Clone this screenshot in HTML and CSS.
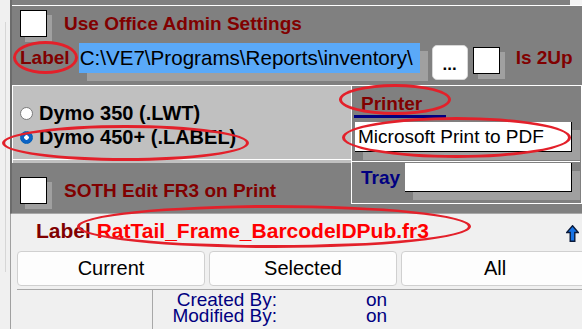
FILE: index.html
```html
<!DOCTYPE html>
<html lang="en">
<head>
    <meta charset="UTF-8">
    <title>Label Settings</title>
    <link rel="stylesheet" href="styles.css">
</head>
<body>
    <div class="screen">
        <div class="upper">
            <div class="strip"></div>
            <div class="admin">
                <div class="row row-top">
                    <span class="check"></span>
                    <span class="red-label">Use Office Admin Settings</span>
                </div>
                <div class="row row-path">
                    <span class="red-label">Label</span>
                    <div class="path-field">C:\VE7\Programs\Reports\inventory\</div>
                    <button class="dots">...</button>
                    <span class="check check-2up"></span>
                    <span class="red-label">Is 2Up</span>
                </div>
            </div>
            <div class="middle">
                <div class="left-col">
                    <div class="dymo">
                        <div class="dymo-list">
                            <label class="opt"><span class="radio"></span>Dymo 350 (.LWT)</label>
                            <label class="opt"><span class="radio on"></span>Dymo 450+ (.LABEL)</label>
                        </div>
                    </div>
                    <div class="soth">
                        <span class="check"></span>
                        <span class="red-label">SOTH Edit FR3 on Print</span>
                    </div>
                </div>
                <div class="printer">
                    <div class="printer-head">Printer</div>
                    <div class="printer-bar"></div>
                    <div class="field printer-field">Microsoft Print to PDF</div>
                    <div class="tray-row">
                        <span class="blue-label">Tray</span>
                        <div class="field tray-field"></div>
                    </div>
                </div>
            </div>
        </div>

        <div class="lower">
            <div class="file-row">
                <div><span class="red-label big">Label</span> <span class="file-name">RatTail_Frame_BarcodeIDPub.fr3</span></div>
                <svg class="up-arrow" width="13" height="17" viewBox="0 0 13 17">
                    <path d="M6.5 0.8 L12.3 7.5 L8.8 7.5 L8.8 16.3 L4.2 16.3 L4.2 7.5 L0.7 7.5 Z" fill="#1673e6" stroke="#0a1a3a" stroke-width="1.4" stroke-linejoin="miter"/>
                </svg>
            </div>
            <div class="buttons">
                <button class="btn">Current</button>
                <button class="btn">Selected</button>
                <button class="btn">All</button>
            </div>
            <div class="info">
                <div class="info-left"></div>
                <div class="info-grid">
                    <span class="info-key">Created By:</span><span class="info-val">on</span>
                    <span class="info-key">Modified By:</span><span class="info-val">on</span>
                </div>
            </div>
        </div>

        <!-- hand-drawn red marks over the screenshot -->
        <div class="mark mark-label"></div>
        <div class="mark mark-printer"></div>
        <div class="mark mark-pdf"></div>
        <div class="mark mark-dymo"></div>
        <div class="mark mark-file"></div>
    </div>
</body>
</html>
```

FILE: styles.css
```css
body {
    margin: 0;
    background-color: #f0f0f0;
    font-family: "Liberation Sans", Arial, sans-serif;
    color: black;
}

.screen {
    position: relative;
    width: 582px;
    height: 329px;
    overflow: hidden;
    background: linear-gradient(#d6d6d6, #d6d6d6) 5px 22px / 1px 250px no-repeat;
}

.upper {
    margin-left: 10px;
    border-left: 2px solid #6c6c6c;
    border-bottom: 1px solid #a8a8a8;
    background-color: #808080;
}

.strip {
    height: 5px;
    border-bottom: 1px solid #ffffff;
    background: linear-gradient(to left, #f4f4f4 12px, #808080 12px);
}

.admin {
    height: 79px;
    box-sizing: border-box;
    padding: 4px 0 0 8px;
}

.row {
    display: flex;
}

.row-top {
    align-items: center;
    gap: 17px;
}

.row-path {
    margin-top: 6px;
    align-items: flex-start;
}

.red-label {
    color: #800000;
    font-weight: bold;
    font-size: 19px;
    white-space: nowrap;
}

.blue-label {
    color: #000080;
    font-weight: bold;
    font-size: 19px;
}

.row-path .red-label {
    line-height: 30px;
}

.check {
    display: inline-block;
    width: 25px;
    height: 25px;
    background-color: white;
    border: 1px solid black;
    box-shadow: 5px 5px 0 #a0a0a0;
    flex-shrink: 0;
}

.path-field {
    margin-left: 9px;
    width: 340px;
    height: 30px;
    line-height: 30px;
    padding-left: 1px;
    font-size: 20.6px;
    background-color: #5aa9f8;
    white-space: nowrap;
    overflow: hidden;
    box-shadow: 8px 8px 0 #a0a0a0;
}

.dots {
    margin: 2px 0 0 12px;
    width: 36px;
    height: 35px;
    padding: 0 0 4px;
    background-color: white;
    border: 1px solid #d8d8d8;
    border-radius: 5px;
    font-family: inherit;
    font-size: 17px;
    font-weight: bold;
    display: flex;
    align-items: flex-end;
    justify-content: center;
}

.check-2up {
    margin: 4px 16px 0 5px;
}

.middle {
    display: flex;
    height: 128px;
}

.left-col {
    width: 339px;
}

.dymo {
    height: 78px;
    box-sizing: border-box;
    padding-top: 15px;
    background-color: #c0c0c0;
    border-top: 1px solid #ffffff;
    border-left: 1px solid #ffffff;
}

.dymo-list {
    height: 58px;
    border-bottom: 1px solid #ffffff;
}

.opt {
    display: flex;
    align-items: center;
    gap: 6px;
    height: 24px;
    padding-left: 7px;
    font-size: 20px;
    font-weight: bold;
}

.radio {
    width: 11px;
    height: 11px;
    border-radius: 50%;
    border: 1px solid #7a7a7a;
    background-color: white;
}

.radio.on {
    border-color: #005fb8;
    background: radial-gradient(circle, white 0 2px, #0b63c5 2.5px);
}

.soth {
    height: 50px;
    box-sizing: border-box;
    padding: 14px 0 0 8px;
    display: flex;
    align-items: flex-start;
    gap: 17px;
}

.soth .red-label {
    line-height: 27px;
}

.printer {
    width: 231px;
    height: 119px;
    box-sizing: border-box;
    border: 1px solid #ffffff;
    padding: 0 9px 0 2px;
}

.printer-head {
    padding: 7px 0 0 7px;
    height: 22px;
    color: #800000;
    font-weight: bold;
    font-size: 19px;
    line-height: 22px;
}

.printer-bar {
    width: 92px;
    height: 3px;
    background-color: #000080;
}

.field {
    background-color: white;
    border-right: 1px solid black;
    border-bottom: 1px solid black;
    box-shadow: 8px 8px 0 #a0a0a0;
    box-sizing: border-box;
}

.printer-field {
    margin: 4px 0 0 1px;
    height: 30px;
    padding-left: 3px;
    font-size: 19px;
    line-height: 29px;
}

.tray-row {
    margin: 9px -8px 0 -2px;
    border-top: 1px solid #ffffff;
    padding: 1px 8px 0 9px;
    display: flex;
    align-items: center;
    gap: 5px;
}

.tray-field {
    flex: 1;
    height: 29px;
}

.lower {
    margin-left: 10px;
    border-left: 1px solid #a0a0a0;
    height: 120px;
}

.file-row {
    display: flex;
    justify-content: space-between;
    align-items: center;
    height: 34px;
    padding: 0 3px 0 25px;
    font-size: 21px;
    font-weight: bold;
}

.red-label.big {
    font-size: 21px;
}

.file-name {
    color: #ff0000;
}

.up-arrow {
    margin-top: 5px;
}

.buttons {
    display: grid;
    grid-template-columns: 188px 188px 188px;
    gap: 4px;
    margin: 3px 0 0 6px;
}

.btn {
    height: 35px;
    background-color: #fdfdfd;
    border: 1px solid #d0d0d0;
    border-radius: 4px;
    font-family: inherit;
    font-size: 20px;
    color: black;
}

.info {
    display: flex;
    align-items: flex-start;
    margin: 3px 0 0 6px;
    border-top: 1px solid #a8a8a8;
}

.info-left {
    width: 135px;
    height: 60px;
    border-right: 1px solid #a8a8a8;
}

.info-grid {
    display: grid;
    grid-template-columns: 124px auto;
    column-gap: 89px;
    padding-top: 2px;
    color: #000080;
    font-size: 19px;
    line-height: 16px;
}

.info-key {
    text-align: right;
}

.mark {
    position: absolute;
    border: 3px solid #e3202a;
    border-radius: 50%;
    box-sizing: border-box;
}

.mark-label {
    left: 13px;
    top: 41px;
    width: 65px;
    height: 33px;
}

.mark-printer {
    left: 339px;
    top: 84px;
    width: 112px;
    height: 31px;
}

.mark-pdf {
    left: 342px;
    top: 117px;
    width: 229px;
    height: 41px;
}

.mark-dymo {
    left: 2px;
    top: 125px;
    width: 247px;
    height: 36px;
}

.mark-file {
    left: 77px;
    top: 205px;
    width: 394px;
    height: 43px;
}
```
